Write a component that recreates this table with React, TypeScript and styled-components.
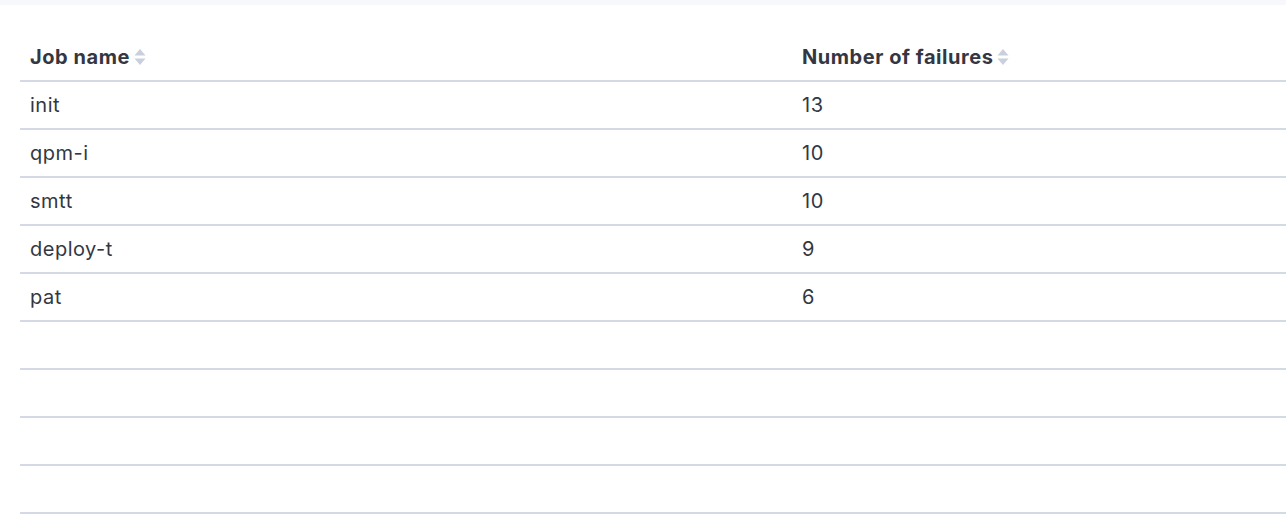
import React from "react";
import styled, { createGlobalStyle } from "styled-components";

const Global = createGlobalStyle`
  html, body { margin: 0; padding: 0; background: #fff; }
  body { font-family: Inter, "Noto Sans", sans-serif; color: #343741; }
`;

const TopStrip = styled.div`
  height: 5px;
  background: #f7f8fc;
`;

const Wrapper = styled.div`
  padding: 29px 0 0 20px;
`;

const Table = styled.table`
  width: 100%;
  border-collapse: collapse;
  table-layout: fixed;
`;

const HeadCell = styled.th<{ $w?: string }>`
  width: ${(p) => p.$w ?? "auto"};
  height: 46px;
  padding: 0 10px;
  text-align: left;
  font-size: 20px;
  font-weight: 700;
  letter-spacing: 0.55px;
  color: #343741;
  border-bottom: 2px solid #d3dae6;
  vertical-align: middle;
`;

const HeadInner = styled.span`
  display: inline-flex;
  align-items: center;
  gap: 3px;
`;

const Cell = styled.td`
  height: 46px;
  padding: 0 10px;
  font-size: 20px;
  font-weight: 400;
  letter-spacing: 0.5px;
  color: #343741;
  border-bottom: 2px solid #d3dae6;
  vertical-align: middle;
`;

const SortIcon = () => (
  <svg width="14" height="20" viewBox="0 0 14 20" aria-hidden>
    <path d="M7 2 L12.5 8.5 H1.5 Z" fill="#c9cfdc" />
    <path d="M7 18 L12.5 11.5 H1.5 Z" fill="#c9cfdc" />
  </svg>
);

const rows: [string, string][] = [
  ["init", "13"],
  ["qpm-i", "10"],
  ["smtt", "10"],
  ["deploy-t", "9"],
  ["pat", "6"],
  ["", ""],
  ["", ""],
  ["", ""],
  ["", ""],
];

export default function App() {
  return (
    <>
      <Global />
      <TopStrip />
      <Wrapper>
        <Table>
          <thead>
            <tr>
              <HeadCell $w="752px">
                <HeadInner>
                  Job name
                  <SortIcon />
                </HeadInner>
              </HeadCell>
              <HeadCell>
                <HeadInner>
                  Number of failures
                  <SortIcon />
                </HeadInner>
              </HeadCell>
            </tr>
          </thead>
          <tbody>
            {rows.map(([a, b], i) => (
              <tr key={i}>
                <Cell>{a}</Cell>
                <Cell>{b}</Cell>
              </tr>
            ))}
          </tbody>
        </Table>
      </Wrapper>
    </>
  );
}
